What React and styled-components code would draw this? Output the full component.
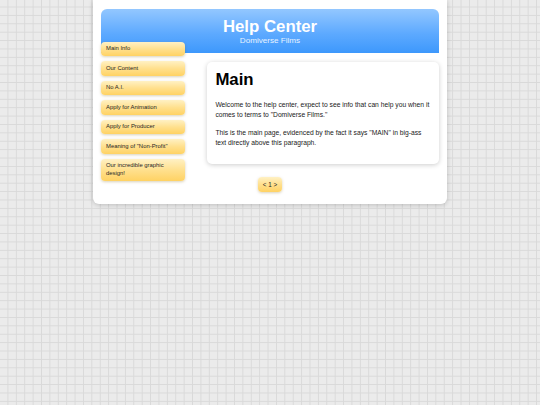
import React from "react";
import styled, { createGlobalStyle } from "styled-components";

const Global = createGlobalStyle`
  html, body { margin: 0; padding: 0; }
  body {
    min-height: 405px;
    font-family: "Liberation Sans", Arial, sans-serif;
    background-color: #ebebeb;
    background-image:
      linear-gradient(to right, transparent 7.2px, #d9d9d9 7.2px, #d9d9d9 8.2px, transparent 8.2px),
      linear-gradient(to bottom, transparent 6.4px, #d9d9d9 6.4px, #d9d9d9 7.4px, transparent 7.4px);
    background-size: 8.4px 8.4px;
  }
`;

const Card = styled.div`
  width: 354px;
  margin: 0 auto;
  box-sizing: border-box;
  background: #fff;
  border-radius: 0 0 6px 6px;
  box-shadow: 0 1px 5px rgba(0, 0, 0, 0.2);
  padding: 9px 8px 12.5px;
  display: grid;
  grid-template-columns: 84px 1fr;
  grid-template-rows: 44px auto auto;
  column-gap: 22px;
`;

const Header = styled.header`
  grid-column: 1 / 3;
  grid-row: 1;
  border-radius: 6px 6px 0 0;
  background: linear-gradient(to bottom, #93c7ff 0%, #5eaaff 55%, #3d98fc 100%);
  display: flex;
  flex-direction: column;
  align-items: center;
  padding-top: 7.5px;
  box-sizing: border-box;
`;

const Title = styled.h1`
  margin: 0;
  font-size: 16.8px;
  line-height: 19px;
  font-weight: bold;
  color: #fff;
`;

const Subtitle = styled.div`
  font-size: 8.1px;
  line-height: 10px;
  color: #e6f2ff;
`;

const Sidebar = styled.nav`
  grid-column: 1;
  grid-row: 2 / 4;
  margin-top: -11px;
  display: flex;
  flex-direction: column;
  gap: 5.1px;
  align-self: start;
  position: relative;
`;

const YellowButton = styled.div`
  box-sizing: border-box;
  background: linear-gradient(to bottom, #fff1c4 0%, #ffe08e 50%, #ffd263 100%);
  border-radius: 4px;
  box-shadow: 0 1px 3px rgba(120, 90, 0, 0.28);
  color: #262626;
  font-size: 5.9px;
  line-height: 7.56px;
`;

const NavButton = styled(YellowButton)`
  padding: 3.4px 5px;
`;

const MainCard = styled.main`
  grid-column: 2;
  grid-row: 2;
  margin-top: 9px;
  background: #fff;
  border-radius: 5px;
  box-shadow: 0 1px 5px rgba(0, 0, 0, 0.2);
  padding: 8.4px 8.4px 8.6px;
`;

const Heading = styled.h2`
  margin: 0 0 10.6px;
  font-size: 16.8px;
  line-height: 19.3px;
  font-weight: bold;
  color: #000;
`;

const Para = styled.p`
  margin: 0 0 7.6px;
  font-size: 6.72px;
  line-height: 10px;
  color: #222;
`;

const PagerRow = styled.div`
  grid-column: 1 / 3;
  grid-row: 3;
  display: flex;
  justify-content: center;
  margin-top: 13.2px;
`;

const Pager = styled(YellowButton)`
  padding: 3.4px 5.2px;
  font-size: 6.3px;
  line-height: 7.6px;
`;

const items = [
  "Main Info",
  "Our Content",
  "No A.I.",
  "Apply for Animation",
  "Apply for Producer",
  'Meaning of "Non-Profit"',
  "Our incredible graphic design!",
];

export default function App() {
  return (
    <>
      <Global />
      <Card>
        <Header>
          <Title>Help Center</Title>
          <Subtitle>Domiverse Films</Subtitle>
        </Header>
        <Sidebar>
          {items.map((t) => (
            <NavButton key={t}>{t}</NavButton>
          ))}
        </Sidebar>
        <MainCard>
          <Heading>Main</Heading>
          <Para>
            Welcome to the help center, expect to see info that can help you when it comes to terms to "Domiverse Films."
          </Para>
          <Para>
            This is the main page, evidenced by the fact it says "MAIN" in big-ass text directly above this paragraph.
          </Para>
        </MainCard>
        <PagerRow>
          <Pager>&lt; 1 &gt;</Pager>
        </PagerRow>
      </Card>
    </>
  );
}
